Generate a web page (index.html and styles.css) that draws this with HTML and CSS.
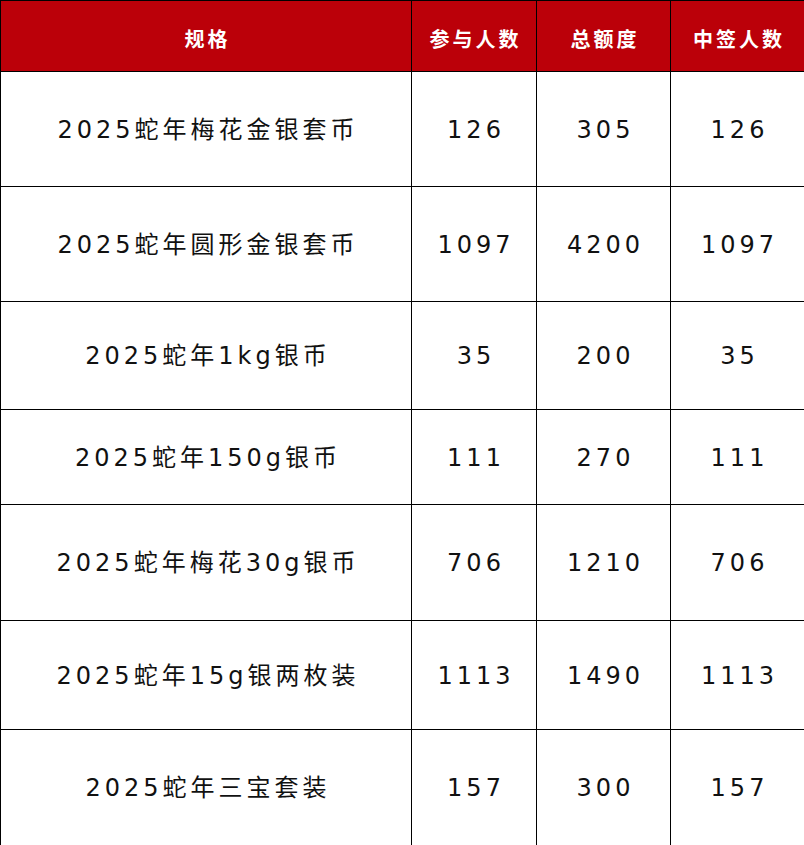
FILE: index.html
```html
<!DOCTYPE html>
<html lang="zh">
<head>
<meta charset="utf-8">
<title>2025蛇年</title>
<link rel="stylesheet" href="styles.css">
</head>
<body>
<table class="grid">
  <colgroup>
    <col class="c1"><col class="c2"><col class="c3"><col class="c4">
  </colgroup>
  <thead>
    <tr class="head">
      <th>规格</th><th>参与人数</th><th>总额度</th><th>中签人数</th>
    </tr>
  </thead>
  <tbody>
    <tr class="r1"><td class="name">2025蛇年梅花金银套币</td><td>126</td><td>305</td><td>126</td></tr>
    <tr class="r2"><td class="name">2025蛇年圆形金银套币</td><td>1097</td><td>4200</td><td>1097</td></tr>
    <tr class="r3"><td class="name">2025蛇年1kg银币</td><td>35</td><td>200</td><td>35</td></tr>
    <tr class="r4"><td class="name">2025蛇年150g银币</td><td>111</td><td>270</td><td>111</td></tr>
    <tr class="r5"><td class="name">2025蛇年梅花30g银币</td><td>706</td><td>1210</td><td>706</td></tr>
    <tr class="r6"><td class="name">2025蛇年15g银两枚装</td><td>1113</td><td>1490</td><td>1113</td></tr>
    <tr class="r7"><td class="name">2025蛇年三宝套装</td><td>157</td><td>300</td><td>157</td></tr>
  </tbody>
</table>
</body>
</html>
```
FILE: styles.css
```css
html, body {
  margin: 0;
  padding: 0;
  background: #ffffff;
  overflow: hidden;
}
.grid {
  border-collapse: separate;
  border-spacing: 0;
  table-layout: fixed;
  width: 805px;
  border-top: 1px solid #000;
  border-left: 1px solid #000;
  font-family: "DejaVu Sans", "Noto Sans CJK SC", sans-serif;
}
.c1 { width: 411px; }
.c2 { width: 125px; }
.c3 { width: 134px; }
.c4 { width: 134px; }
.grid th, .grid td {
  box-sizing: border-box;
  border-right: 1px solid #000;
  border-bottom: 1px solid #000;
  padding: 0;
  text-align: center;
  vertical-align: middle;
}
.grid th {
  background: #bb0009;
  color: #fff;
  font-family: "Noto Sans CJK SC", sans-serif;
  font-size: 20px;
  font-weight: 700;
  letter-spacing: 3px;
  height: 71px;
  padding: 4px 0 0 3px;
}
.grid td {
  color: #111;
  font-size: 24px;
  font-weight: 400;
  letter-spacing: 4px;
  line-height: 1.2;
  padding: 2px 0 0 4px;
}
.r1 td { height: 115px; }
.r2 td { height: 115px; }
.r3 td { height: 108px; }
.r4 td { height: 95px; }
.r5 td { height: 116px; }
.r6 td { height: 109px; }
.r7 td { height: 116px; }
```
